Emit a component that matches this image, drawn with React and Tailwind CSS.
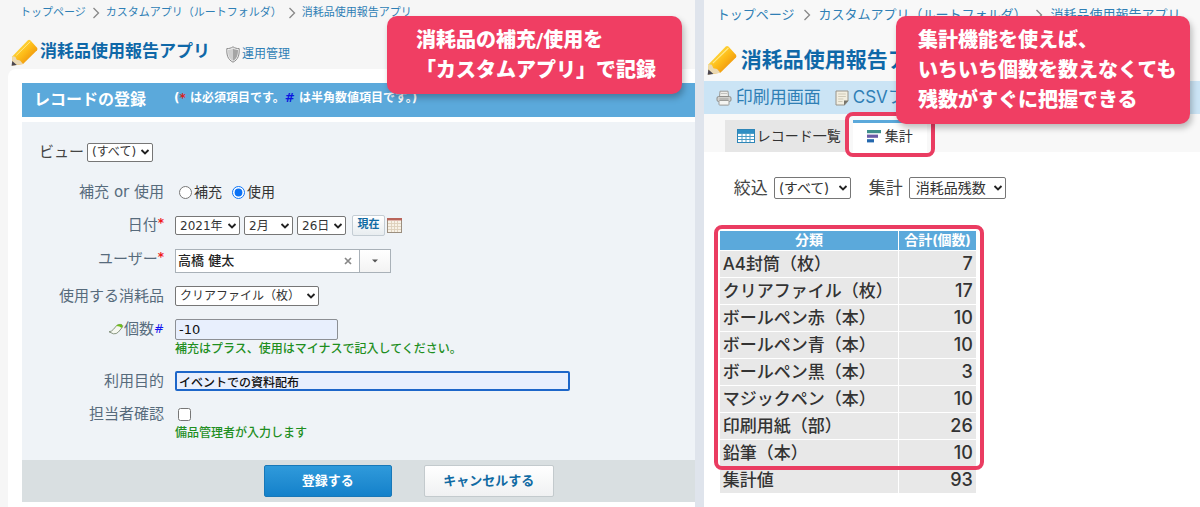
import React, { useState } from "react";

const stock = [
  { name: "A4封筒（枚）", total: 7 },
  { name: "クリアファイル（枚）", total: 17 },
  { name: "ボールペン赤（本）", total: 10 },
  { name: "ボールペン青（本）", total: 10 },
  { name: "ボールペン黒（本）", total: 3 },
  { name: "マジックペン（本）", total: 10 },
  { name: "印刷用紙（部）", total: 26 },
  { name: "鉛筆（本）", total: 10 },
];

const PencilIcon = ({ id, className }) => (
  <svg viewBox="0 0 28 28" className={className} aria-hidden="true">
    <defs>
      <linearGradient id={id} x1="0" y1="0" x2="1" y2="1">
        <stop offset="0.25" stopColor="#ffd83c" />
        <stop offset="0.5" stopColor="#fdbb18" />
        <stop offset="0.75" stopColor="#f0990f" />
      </linearGradient>
    </defs>
    <path d="M1.5 18 L17.5 1.4 Q18.8 0.4 20 1.4 L27 9 Q28 10.4 27 11.6 L12.5 26 L1 27.5 Z" fill={`url(#${id})`} />
    <path d="M1.5 18 L4.5 18.4 L6 21.6 L9.4 22.4 L12.5 26 L1 27.5 Z" fill="#ead9b4" />
    <path d="M1.3 22.8 L6 27 L0.6 27.8 Z" fill="#4a4650" />
    <path d="M5.5 17 L20 2.8" stroke="#ffe98a" strokeWidth="1" fill="none" />
  </svg>
);

const ShieldIcon = () => (
  <svg viewBox="0 0 14 17" className="w-[14px] h-[17px]" aria-hidden="true">
    <path d="M7 0.8 C9 2.2 11 2.6 13.2 2.6 C13.4 9 12.4 13.4 7 16.2 C1.6 13.4 0.6 9 0.8 2.6 C3 2.6 5 2.2 7 0.8 Z" fill="#f2f2f2" stroke="#8b8b8b" />
    <path d="M7 2.4 C8.6 3.4 10.2 3.8 12 3.9 C12 9 11 12.4 7 14.8 Z" fill="#a5a5a5" />
    <path d="M7 2.4 C5.4 3.4 3.8 3.8 2 3.9 C2 9 3 12.4 7 14.8 Z" fill="#cfcfcf" />
  </svg>
);

const PrinterIcon = () => (
  <svg viewBox="0 0 16 16" className="w-4 h-4" aria-hidden="true">
    <path d="M3.5 6.5 L4 1.2 H12 L12.5 6.5" fill="#ededea" stroke="#9b9b98" />
    <path d="M5 3.5 H11" stroke="#c2c2bf" />
    <rect x="1" y="6.5" width="14" height="5" rx="1.6" fill="#cfcfcc" stroke="#8f8f8c" />
    <rect x="3" y="10.5" width="10" height="4.6" rx="0.8" fill="#f5f5f2" stroke="#9b9b98" />
    <path d="M3.5 9 H12.5" stroke="#9e9e9b" />
  </svg>
);

const NoteIcon = () => (
  <svg viewBox="0 0 14 16" className="w-[14px] h-4" aria-hidden="true">
    <path d="M1 1 H13 V11 L9.5 15 H1 Z" fill="#f2eee0" stroke="#98948a" />
    <path d="M13.4 10.6 H9 V15.4 Z" fill="#77746b" />
    <path d="M3.2 4 H10.8 M3.2 6.5 H10.8 M3.2 9 H8.4 M3.2 11.5 H7.5" stroke="#cfcab8" />
  </svg>
);

const ListIcon = () => (
  <svg viewBox="0 0 18 14" className="w-[18px] h-[14px]" aria-hidden="true">
    <rect x="0.5" y="0.5" width="17" height="13" fill="#fff" stroke="#2e86b8" />
    <rect x="1" y="1" width="16" height="3" fill="#2f8fc4" />
    <path d="M1 4.5 H17 M1 7.5 H17 M1 10.5 H17 M5 4 V13 M9 4 V13 M13 4 V13" stroke="#4c9dc6" />
  </svg>
);

const ChartIcon = () => (
  <svg viewBox="0 0 14 13" className="w-[14px] h-[13px]" aria-hidden="true">
    <rect x="0" y="0" width="14" height="3.2" fill="#3f8f8c" />
    <rect x="0" y="4.6" width="11" height="3.2" fill="#6b5ba6" />
    <rect x="0" y="9.2" width="7" height="3.2" fill="#2468ae" />
  </svg>
);

const EraserIcon = () => (
  <svg viewBox="0 0 16 12" className="w-4 h-3" aria-hidden="true">
    <path d="M1 8.8 Q3.6 8.6 5.4 6.4 L8.6 2.6 Q10 1.2 12.2 1.4 L14 1.8 Q15.4 2.4 14.4 4.2 L10.4 9 Q8.4 11.2 5.4 10.8 Z" fill="#f6f8f0" stroke="#7c8a74" strokeWidth="0.9" />
    <path d="M8 3 Q10 0.9 12.4 1.2 L14 1.8 Q15.2 2.6 13.6 5 Q11.6 2.8 8 3 Z" fill="#6fc018" />
  </svg>
);

const CalendarIcon = () => (
  <svg viewBox="0 0 15 15" className="w-[15px] h-[15px]" aria-hidden="true">
    <rect x="0.5" y="0.5" width="14" height="14" fill="#f7f1e6" stroke="#9b8f80" />
    <rect x="0" y="0" width="15" height="2.4" fill="#b9645a" />
    <path d="M1 5.5 H14 M1 8.5 H14 M1 11.5 H14 M4.5 3 V14 M7.5 3 V14 M10.5 3 V14" stroke="#dccfba" strokeWidth="0.9" />
  </svg>
);

const Select = ({ id, label, options, className }) => (
  <span className="relative inline-flex">
    <select
      id={id}
      aria-label={label}
      className={`appearance-none rounded-xs border border-[#767676] bg-white pl-1 text-[#333] ${className}`}
    >
      {options.map((o) => (
        <option key={o}>{o}</option>
      ))}
    </select>
    <svg viewBox="0 0 10 7" className="pointer-events-none absolute right-[3px] top-1/2 w-[10px] h-[7px] -translate-y-1/2" aria-hidden="true">
      <path d="M1.5 1.5 L5 5 L8.5 1.5" fill="none" stroke="#222" strokeWidth="1.9" />
    </svg>
  </span>
);

const Breadcrumb = ({ className }) => {
  const items = ["トップページ", "カスタムアプリ（ルートフォルダ）", "消耗品使用報告アプリ"];
  return (
    <nav className={`flex items-center whitespace-nowrap text-[#2f7fb5] ${className}`}>
      {items.map((item, i) => (
        <React.Fragment key={item}>
          {i > 0 && (
            <svg viewBox="0 0 8 12" className="w-2 h-3 shrink-0" aria-hidden="true">
              <path d="M1.5 1 L6.5 6 L1.5 11" fill="none" stroke="#888" strokeWidth="1.3" />
            </svg>
          )}
          <a href="#">{item}</a>
        </React.Fragment>
      ))}
    </nav>
  );
};

const Row = ({ label, htmlFor, mark, markClass, icon, hint, children }) => (
  <div className="grid grid-cols-[142px_1fr] items-start gap-x-[11px]">
    <label htmlFor={htmlFor} className="flex items-center justify-end whitespace-nowrap text-[15px] leading-5 text-[#576b7c]">
      {icon}
      {label}
      {mark && <span className={markClass}>{mark}</span>}
    </label>
    <div>
      {children}
      {hint && <p className="text-xs leading-[18px] font-medium text-[#1f8f1f]">{hint}</p>}
    </div>
  </div>
);

const Callout = ({ lines, className }) => (
  <div className={`absolute top-4 z-10 whitespace-nowrap rounded-[10px] bg-[#f03e63] text-xl leading-[30px] font-black text-white shadow-[2px_4px_6px_rgba(0,0,0,0.25)] ${className}`}>
    {lines.map((line) => (
      <p key={line}>{line}</p>
    ))}
  </div>
);

const RecordForm = () => {
  const [kind, setKind] = useState("使用");
  const [user, setUser] = useState("高橋 健太");

  return (
    <section className="relative flex min-w-0 flex-col bg-[#f6f6f6]">
      <Breadcrumb className="h-[26px] gap-[6px] pl-5 text-[11px]" />
      <div className="flex h-[43px] items-center pl-[11px] pt-[9px]">
        <PencilIcon id="pencil-form" className="w-[27px] h-[27px]" />
        <h1 className="ml-[2px] text-[17px] font-bold text-[#0f68a8]">消耗品使用報告アプリ</h1>
        <a href="#" className="ml-4 flex items-center gap-[2px] pt-1 text-xs text-[#2f7fb5]">
          <ShieldIcon />
          運用管理
        </a>
      </div>
      <div className="ml-2 grow rounded-tl-lg bg-white pl-[14px] pt-[14px]">
        <div className="flex h-[34px] items-center gap-7 bg-[#5ba9db] pl-3 text-white">
          <h2 className="text-base font-bold">レコードの登録</h2>
          <p className="pb-1 text-xs font-bold whitespace-nowrap">
            (<span className="text-[#d81e1e]">*</span> は必須項目です。<span className="text-[#0b16e0]">#</span> は半角数値項目です。)
          </p>
        </div>
        <form className="mt-[5px]" onSubmit={(e) => e.preventDefault()}>
          <div className="bg-[#eff3f7] pb-[18px] pt-5">
            <div className="mb-5 flex items-center gap-[3px] pl-[17px]">
              <label htmlFor="view" className="text-[15px] leading-5 text-[#444]">ビュー</label>
              <Select id="view" options={["(すべて)"]} className="h-[19px] w-[66px] text-xs" />
            </div>
            <div className="flex flex-col gap-[13px]">
              <Row label="補充 or 使用" htmlFor="kind-use">
                <div className="flex h-5 items-center gap-[10px] pl-1 text-sm text-[#333]">
                  {["補充", "使用"].map((k) => (
                    <label key={k} className="flex items-center gap-[2px]">
                      <input
                        type="radio"
                        name="kind"
                        id={k === "使用" ? "kind-use" : "kind-add"}
                        checked={kind === k}
                        onChange={() => setKind(k)}
                        className="size-[13px] accent-[#0b72f5]"
                      />
                      {k}
                    </label>
                  ))}
                </div>
              </Row>
              <Row label="日付" htmlFor="year" mark="*" markClass="pb-1 text-xs font-bold text-[#f01818]">
                <div className="flex h-[21px] items-center">
                  <div className="flex gap-1">
                    <Select id="year" options={["2021年"]} className="h-[19px] w-[65px] text-xs" />
                    <Select id="month" label="月" options={["2月"]} className="h-[19px] w-[49px] text-xs" />
                    <Select id="day" label="日" options={["26日"]} className="h-[19px] w-[49px] text-xs" />
                  </div>
                  <button type="button" className="ml-[6px] mr-[2px] h-[21px] w-[33px] rounded-xs border border-[#c4cdd4] bg-linear-to-b from-white to-[#e8edf0] text-[11px] font-bold text-[#0f6aa3]">
                    現在
                  </button>
                  <button type="button" aria-label="カレンダー">
                    <CalendarIcon />
                  </button>
                </div>
              </Row>
              <Row label="ユーザー" htmlFor="user" mark="*" markClass="pb-1 text-xs font-bold text-[#f01818]">
                <div className="flex h-6 w-[216px] border border-[#a9b1b8] bg-white">
                  <input
                    id="user"
                    type="text"
                    value={user}
                    onChange={(e) => setUser(e.target.value)}
                    className="min-w-0 grow pl-[2px] text-[13px] font-medium text-[#222] outline-none"
                  />
                  <button type="button" aria-label="クリア" onClick={() => setUser("")} className="flex w-6 items-center justify-center">
                    <svg viewBox="0 0 8 8" className="size-2" aria-hidden="true">
                      <path d="M1 1 L7 7 M7 1 L1 7" stroke="#888" strokeWidth="1.7" />
                    </svg>
                  </button>
                  <button type="button" aria-label="ユーザーを選択" className="flex w-[33px] items-center justify-center border-l border-[#a9b1b8] bg-linear-to-b from-white to-[#f3f3f3]">
                    <svg viewBox="0 0 6 4" className="w-[6px] h-1" aria-hidden="true">
                      <path d="M0 0.5 H6 L3 3.5 Z" fill="#555" />
                    </svg>
                  </button>
                </div>
              </Row>
              <Row label="使用する消耗品" htmlFor="item">
                <div className="flex">
                  <Select id="item" options={["クリアファイル（枚）"]} className="h-5 w-36 text-xs" />
                </div>
              </Row>
              <Row
                label="個数"
                htmlFor="count"
                mark="#"
                markClass="text-xs font-medium text-[#1414f0]"
                icon={<EraserIcon />}
                hint="補充はプラス、使用はマイナスで記入してください。"
              >
                <input id="count" type="text" defaultValue="-10" className="block h-[21px] w-[163px] rounded-xs border border-[#8c8f94] bg-[#e8effd] px-[3px] text-[13px] text-[#111]" />
              </Row>
              <Row label="利用目的" htmlFor="purpose">
                <input id="purpose" type="text" defaultValue="イベントでの資料配布" className="block h-5 w-[395px] rounded-xs border-2 border-[#1d66c9] bg-[#e8effd] px-[2px] text-xs font-medium text-[#111] outline-none" />
              </Row>
              <Row label="担当者確認" htmlFor="confirm" hint="備品管理者が入力します">
                <div className="flex h-5 items-center pl-[3px]">
                  <input id="confirm" type="checkbox" className="size-[13px]" />
                </div>
              </Row>
            </div>
          </div>
          <div className="flex h-[42px] items-center justify-center gap-8 bg-[#d9dfe1] pl-[101px] text-[13px] font-bold">
            <button type="submit" className="h-8 w-32 rounded-xs border border-[#1878b8] bg-linear-to-b from-[#2f9adb] to-[#1381ca] text-white">
              登録する
            </button>
            <button type="button" className="h-8 w-[130px] rounded-xs border border-[#c3cacd] bg-linear-to-b from-white to-[#f0f1f2] text-[#0f6aa3]">
              キャンセルする
            </button>
          </div>
        </form>
      </div>
      <Callout className="left-[387px] w-[295px] pl-[29px] py-[9px]" lines={["消耗品の補充/使用を", "「カスタムアプリ」で記録"]} />
    </section>
  );
};

const Summary = () => {
  const total = stock.reduce((sum, s) => sum + s.total, 0);

  return (
    <section className="relative min-w-0 overflow-hidden bg-white [font-family:Inter,'Noto_Sans_CJK_JP',sans-serif]">
      <div className="bg-[#f8f8f8]">
        <Breadcrumb className="h-[30px] gap-2 pl-[13px] text-[13px]" />
        <div className="flex h-[51px] items-center gap-1 pl-[3px] pt-[9px]">
          <PencilIcon id="pencil-summary" className="w-[30px] h-[30px]" />
          <h1 className="whitespace-nowrap text-[21px] font-bold text-[#0f68a8]">消耗品使用報告アプリ</h1>
        </div>
        <div className="flex h-[33px] items-center gap-[14px] bg-[#cbe4f5] pl-3 text-[17px] text-[#2f7fb5]">
          <a href="#" className="flex items-center gap-1">
            <PrinterIcon />
            印刷用画面
          </a>
          <a href="#" className="flex items-center gap-1 whitespace-nowrap">
            <NoteIcon />
            CSVファイル
          </a>
        </div>
        <div className="flex gap-1 pl-[21px] pt-[6px] text-sm text-[#333]">
          <button type="button" className="flex h-8 w-[124px] items-center gap-[2px] whitespace-nowrap bg-[#e6e6e6] pl-3">
            <ListIcon />
            レコード一覧
          </button>
          <div className="relative">
            <button type="button" className="flex h-8 w-[74px] items-center gap-1 border-t-3 border-[#5ba9db] bg-white pb-[3px] pl-[14px]">
              <ChartIcon />
              集計
            </button>
            <div className="pointer-events-none absolute -inset-x-2 -top-2 -bottom-[5px] rounded-lg border-4 border-[#ea3c61]" />
          </div>
        </div>
      </div>
      <div className="px-4 pt-[25px]">
        <div className="flex items-center pl-[14px] text-[17px] leading-[21px] text-[#444]">
          <label htmlFor="filter">絞込</label>
          <span className="ml-[6px] mr-[18px] flex">
            <Select id="filter" options={["(すべて)"]} className="h-[22px] w-[77px] text-sm" />
          </span>
          <label htmlFor="summary">集計</label>
          <span className="ml-[6px] flex">
            <Select id="summary" options={["消耗品残数"]} className="h-[22px] w-[97px] pl-[6px] text-sm" />
          </span>
        </div>
        <div className="relative mt-8 w-64">
          <table className="w-full border-collapse text-[17px] font-medium text-[#333]">
            <thead>
              <tr className="h-[19px] border-b border-white bg-[#5ba9db] text-sm leading-[18px] text-white">
                <th className="border-r border-white p-0 font-bold">分類</th>
                <th className="w-[77px] p-0 font-bold">合計(個数)</th>
              </tr>
            </thead>
            <tbody>
              {[...stock, { name: "集計値", total }].map((s) => (
                <tr key={s.name} className="h-[27px] border-b border-white bg-[#e8e8e8] leading-[26px]">
                  <td className="border-r border-white py-0 pl-[3px] pr-0">{s.name}</td>
                  <td className="py-0 pl-0 pr-[3px] text-right text-lg leading-[26px]">{s.total}</td>
                </tr>
              ))}
            </tbody>
          </table>
          <div className="pointer-events-none absolute -left-[6px] -right-2 -top-[6px] bottom-6 rounded-lg border-4 border-[#ea3c61]" />
        </div>
      </div>
      <Callout className="right-[10px] w-[294px] px-[22px] py-[9px]" lines={["集計機能を使えば、", "いちいち個数を数えなくても", "残数がすぐに把握できる"]} />
    </section>
  );
};

export default function App() {
  return (
    <main className="grid min-h-screen grid-cols-[7fr_9px_5fr] bg-[#dfe4ec] [font-family:'DejaVu_Sans','Noto_Sans_CJK_JP',sans-serif]">
      <RecordForm />
      <div />
      <Summary />
    </main>
  );
}
